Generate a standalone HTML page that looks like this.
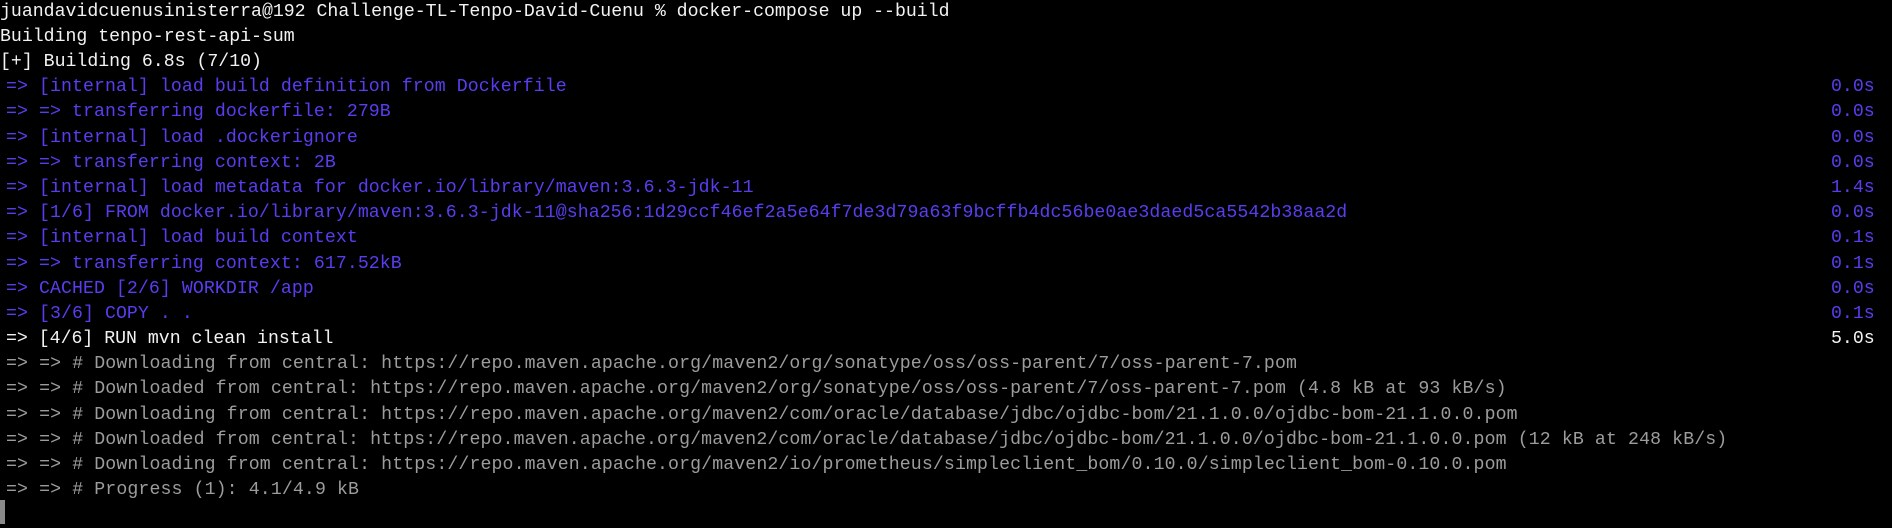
<!DOCTYPE html>
<html><head><meta charset="utf-8"><style>
html,body{margin:0;padding:0;background:#000;}
body{width:1892px;height:528px;overflow:hidden;position:relative;font-family:"Liberation Mono","DejaVu Sans Mono",monospace;font-size:18.2px;}
.l{position:absolute;left:0;height:25px;line-height:25px;white-space:pre;}
.w{color:#f2f2f2}
.b{color:#5a3df0;letter-spacing:0.08px}
.g{color:#9c9c9c;letter-spacing:0.12px}
.a{left:6px}
.t{position:absolute;left:1831px;line-height:25px;white-space:pre;letter-spacing:0}
.cur{position:absolute;left:0;top:500px;width:5px;height:24px;background:#8a8a8a}
</style></head><body>
<div class="l w" style="top:0px">juandavidcuenusinisterra@192 Challenge-TL-Tenpo-David-Cuenu % docker-compose up --build</div>
<div class="l w" style="top:25px">Building tenpo-rest-api-sum</div>
<div class="l w" style="top:50px">[+] Building 6.8s (7/10)</div>
<div class="l b a" style="top:75px">=&gt; [internal] load build definition from Dockerfile</div><div class="t b" style="top:75px">0.0s</div>
<div class="l b a" style="top:100px">=&gt; =&gt; transferring dockerfile: 279B</div><div class="t b" style="top:100px">0.0s</div>
<div class="l b a" style="top:126px">=&gt; [internal] load .dockerignore</div><div class="t b" style="top:126px">0.0s</div>
<div class="l b a" style="top:151px">=&gt; =&gt; transferring context: 2B</div><div class="t b" style="top:151px">0.0s</div>
<div class="l b a" style="top:176px">=&gt; [internal] load metadata for docker.io/library/maven:3.6.3-jdk-11</div><div class="t b" style="top:176px">1.4s</div>
<div class="l b a" style="top:201px">=&gt; [1/6] FROM docker.io/library/maven:3.6.3-jdk-11@sha256:1d29ccf46ef2a5e64f7de3d79a63f9bcffb4dc56be0ae3daed5ca5542b38aa2d</div><div class="t b" style="top:201px">0.0s</div>
<div class="l b a" style="top:226px">=&gt; [internal] load build context</div><div class="t b" style="top:226px">0.1s</div>
<div class="l b a" style="top:252px">=&gt; =&gt; transferring context: 617.52kB</div><div class="t b" style="top:252px">0.1s</div>
<div class="l b a" style="top:277px">=&gt; CACHED [2/6] WORKDIR /app</div><div class="t b" style="top:277px">0.0s</div>
<div class="l b a" style="top:302px">=&gt; [3/6] COPY . .</div><div class="t b" style="top:302px">0.1s</div>
<div class="l w a" style="top:327px">=&gt; [4/6] RUN mvn clean install</div><div class="t w" style="top:327px">5.0s</div>
<div class="l g a" style="top:352px">=&gt; =&gt; # Downloading from central: https://repo.maven.apache.org/maven2/org/sonatype/oss/oss-parent/7/oss-parent-7.pom</div>
<div class="l g a" style="top:377px">=&gt; =&gt; # Downloaded from central: https://repo.maven.apache.org/maven2/org/sonatype/oss/oss-parent/7/oss-parent-7.pom (4.8 kB at 93 kB/s)</div>
<div class="l g a" style="top:403px">=&gt; =&gt; # Downloading from central: https://repo.maven.apache.org/maven2/com/oracle/database/jdbc/ojdbc-bom/21.1.0.0/ojdbc-bom-21.1.0.0.pom</div>
<div class="l g a" style="top:428px">=&gt; =&gt; # Downloaded from central: https://repo.maven.apache.org/maven2/com/oracle/database/jdbc/ojdbc-bom/21.1.0.0/ojdbc-bom-21.1.0.0.pom (12 kB at 248 kB/s)</div>
<div class="l g a" style="top:453px">=&gt; =&gt; # Downloading from central: https://repo.maven.apache.org/maven2/io/prometheus/simpleclient_bom/0.10.0/simpleclient_bom-0.10.0.pom</div>
<div class="l g a" style="top:478px">=&gt; =&gt; # Progress (1): 4.1/4.9 kB</div>
<div class="cur"></div>
</body></html>
